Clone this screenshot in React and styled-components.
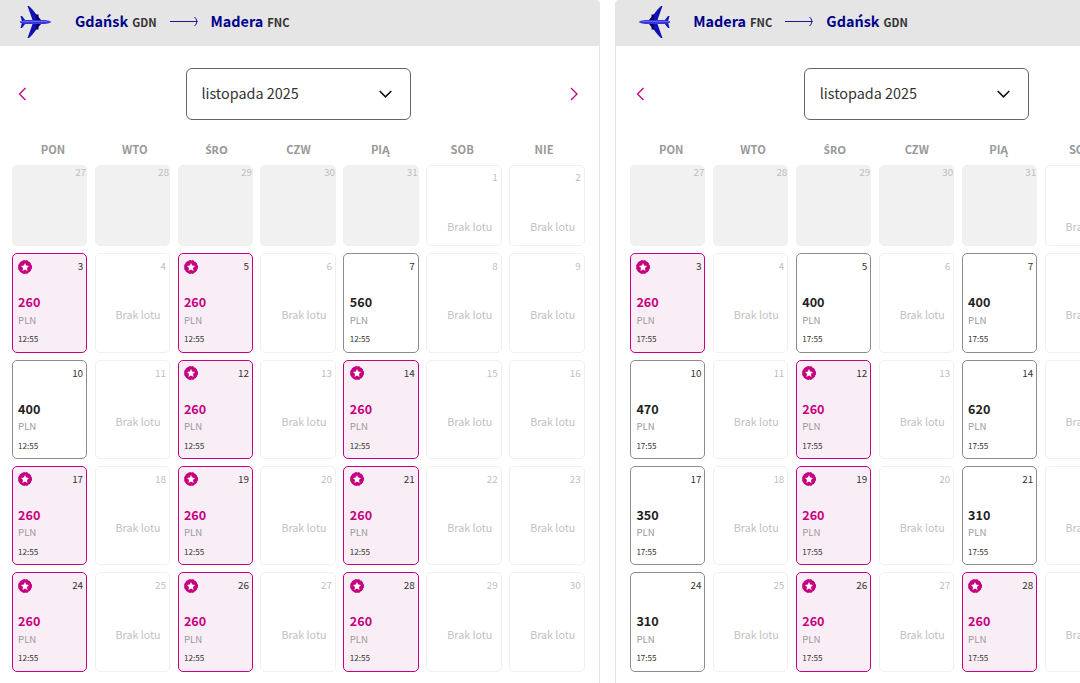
import React from "react";
import styled, { createGlobalStyle, css } from "styled-components";

const GlobalStyle = createGlobalStyle`
    * {
        box-sizing: border-box;
    }

    body {
        margin: 0;
        background: #fff;
        color: #333;
        font-family: "Source Sans Pro", "Noto Sans CJK SC", "Noto Sans", sans-serif;
    }
`;

const Page = styled.main`
    display: flex;
    gap: 15.3px;
    height: 683px;
    overflow: hidden;
`;

const Panel = styled.section`
    flex: 0 0 603px;
    border: 1px solid #e5e5e5;
    border-width: 0 1px;
    border-radius: 4px 4px 0 0;
    overflow: hidden;

    &:first-child {
        margin-left: -3px;
    }
`;

const Route = styled.header`
    display: flex;
    align-items: center;
    height: 46px;
    padding-left: 22px;
    background: #e5e5e5;
`;

const Plane = styled.svg`
    width: 32px;
    height: 32px;
    margin: -2px 23px 0 0;
    transform: ${({ $back }) => ($back ? "scaleX(-1)" : "none")};
`;

const City = styled.span`
    color: #00008c;
    font-size: 14.4px;
    font-weight: 700;
    line-height: 20px;
    margin-top: -5px;
`;

const Code = styled.span`
    margin: -2px 0 0 4px;
    font-size: 11.2px;
    font-weight: 700;
    line-height: 20px;
`;

const Arrow = styled.svg`
    width: 29px;
    height: 11px;
    margin: -3px 12px 0 13px;
`;

const MonthBar = styled.div`
    display: flex;
    align-items: center;
    justify-content: space-between;
    height: 52px;
    margin: 22px 20px 0;
`;

const NavButton = styled.button`
    display: flex;
    padding: 0;
    border: 0;
    background: none;
`;

const Select = styled.button`
    display: flex;
    align-items: center;
    justify-content: space-between;
    width: 225px;
    height: 52px;
    padding: 0 18.500px 0 14.400px;
    border: 1px solid #666;
    border-radius: 6px;
    background: #fff;
    color: #333;
    font-family: inherit;
    font-size: 14.4px;
`;

const Month = styled.span`
    padding-bottom: 3px;
`;

const WeekDays = styled.div`
    display: grid;
    grid-template-columns: repeat(7, 1fr);
    height: 19px;
    margin: 20px 14px 6px;
    color: #999;
    font-size: 11.2px;
    font-weight: 700;
    line-height: 19px;
    text-align: center;
`;

const WeekDay = styled.span`
    ${({ $accent }) => $accent && css`
        font-family: "Noto Sans", sans-serif;
    `}
`;

const Days = styled.div`
    display: grid;
    grid-template-columns: repeat(7, 1fr);
    grid-template-rows: 81.3px repeat(4, 99.4px);
    gap: 7px 7.500px;
    margin: 0 14.300px 0 13.700px;
`;

const Cell = styled.div`
    display: flex;
    flex-direction: column;
    border: 1px solid #f0f0f0;
    border-radius: 5px;
    color: #bfbfbf;
    padding: 5px 3px 0 5.400px;

    ${({ $kind }) => $kind === "outside" && css`
        background: #f1f1f1;
        padding: 0;
    `}

    ${({ $kind }) => $kind === "flight" && css`
        border-color: #8c8c8c;
        color: #333;
    `}

    ${({ $kind }) => $kind === "best" && css`
        border-color: #c6007e;
        background: #f9eef6;
        color: #333;
    `}
`;

const Top = styled.div`
    display: flex;
    justify-content: space-between;
    height: 16px;

    svg {
        margin-top: 0.4px;
    }
`;

const DayNumber = styled.span`
    margin: ${({ $raised }) => ($raised ? "-1px" : "0")} 0 0 auto;
    font-size: 9.9px;
    line-height: 14px;
`;

const Price = styled.strong`
    margin-top: 17px;
    color: ${({ $best }) => ($best ? "#c6007e" : "#222")};
    font-size: 12.6px;
    line-height: 20px;
`;

const Currency = styled.span`
    margin-top: -0.700px;
    color: #999;
    font-size: 9.600px;
    line-height: 16px;
`;

const Time = styled.span`
    margin-top: 4.700px;
    font-size: 8.1px;
    line-height: 14px;
`;

const NoFlight = styled.span`
    margin: 31.200px 5.500px 0 0;
    font-size: 10.7px;
    line-height: 18px;
    text-align: right;
`;

const WEEK = ["PON", "WTO", "ŚRO", "CZW", "PIĄ", "SOB", "NIE"];

const outbound = {
    from: ["Gdańsk", "GDN"],
    to: ["Madera", "FNC"],
    time: "12:55",
    prices: {
        3: 260, 5: 260, 7: 560, 10: 400, 12: 260, 14: 260,
        17: 260, 19: 260, 21: 260, 24: 260, 26: 260, 28: 260,
    },
};

const inbound = {
    from: ["Madera", "FNC"],
    to: ["Gdańsk", "GDN"],
    time: "17:55",
    prices: {
        3: 260, 5: 400, 7: 400, 10: 470, 12: 260, 14: 620,
        17: 350, 19: 260, 21: 310, 24: 310, 26: 260, 28: 260,
    },
};

function PlaneIcon({ back }) {
    return (
        <Plane viewBox="0 0 32 32" $back={back}>
            <path d="M7.500 0H9l3.500 3.500 5 6.500 4 4.500v3l-4 4.500-5 6.500L9 32H7.500l2-5.500L12.500 18v-4l-3-8.500z" fill="#1010b4" />
            <path d="M16 8.500h2.500v3l2.500 3h-5zM16 23.500h2.500v-3l2.500-3h-5z" fill="#05055e" />
            <path d="M.5 10H2l3.500 4.500v3L2 22H.5l1.700-6z" fill="#1010b4" />
            <path d="M0 15.300l5-1.300h20q4.500.4 6.500 2-2 1.600-6.500 2H5L0 16.800z" fill="#3636dc" />
            <path d="M1 15.500h26" stroke="#6464f5" strokeWidth="1.200" />
        </Plane>
    );
}

function Chevron({ direction }) {
    const d = direction === "left" ? "M7.500 1L1.500 7l6 6" : "M1 1l6 6-6 6";
    return (
        <svg width="9" height="14" viewBox="0 0 9 14" fill="none">
            <path d={d} stroke="#c6007e" strokeWidth="1.3" />
        </svg>
    );
}

function Badge() {
    return (
        <svg width="14" height="14" viewBox="0 0 14 14">
            <circle cx="7" cy="7" r="6.600" fill="#c6007e" />
            <circle cx="7" cy="7" r="6.500" fill="none" stroke="#c6007e" strokeDasharray="2.400 1" />
            <path d="M7 3l1.200 2.600 2.800.4-2 2 .5 2.900L7 9.500l-2.500 1.400L5 8 3 6l2.800-.4z" fill="#fff" />
        </svg>
    );
}

function Day({ day, price, time }) {
    const kind = !price ? "empty" : price === 260 ? "best" : "flight";

    return (
        <Cell $kind={kind}>
            <Top>
                {kind === "best" && <Badge />}
                <DayNumber $raised={day < 3}>{day}</DayNumber>
            </Top>
            {price ? (
                <>
                    <Price $best={kind === "best"}>{price}</Price>
                    <Currency>PLN</Currency>
                    <Time>{time}</Time>
                </>
            ) : (
                <NoFlight>Brak lotu</NoFlight>
            )}
        </Cell>
    );
}

function Calendar({ flight, back }) {
    const { from, to, time, prices } = flight;
    const days = Array.from({ length: 30 }, (_, i) => i + 1);

    return (
        <Panel>
            <Route>
                <PlaneIcon back={back} />
                <City>{from[0]}</City>
                <Code>{from[1]}</Code>
                <Arrow viewBox="0 0 29 11" fill="none" stroke="#00008c" strokeWidth="0.900">
                    <path d="M0 5.500h27.500M24.500 1q2 1.500 2.500 4.500-.5 3-2.500 4.500" />
                </Arrow>
                <City>{to[0]}</City>
                <Code>{to[1]}</Code>
            </Route>
            <MonthBar>
                <NavButton><Chevron direction="left" /></NavButton>
                <Select>
                    <Month>listopada 2025</Month>
                    <svg width="13" height="8" viewBox="0 0 13 8" fill="none">
                        <path d="M.7 1l5.800 5.800L12.300 1" stroke="#111" strokeWidth="1.600" />
                    </svg>
                </Select>
                <NavButton><Chevron direction="right" /></NavButton>
            </MonthBar>
            <WeekDays>
                {WEEK.map((name) => (
                    <WeekDay key={name} $accent={name.startsWith("Ś")}>{name}</WeekDay>
                ))}
            </WeekDays>
            <Days>
                {[27, 28, 29, 30, 31].map((day) => (
                    <Cell key={`prev-${day}`} $kind="outside">
                        <DayNumber $raised>{day}</DayNumber>
                    </Cell>
                ))}
                {days.map((day) => (
                    <Day key={day} day={day} price={prices[day]} time={time} />
                ))}
            </Days>
        </Panel>
    );
}

function App() {
    return (
        <>
            <GlobalStyle />
            <Page>
                <Calendar flight={outbound} />
                <Calendar flight={inbound} back />
            </Page>
        </>
    );
}

export default App;
